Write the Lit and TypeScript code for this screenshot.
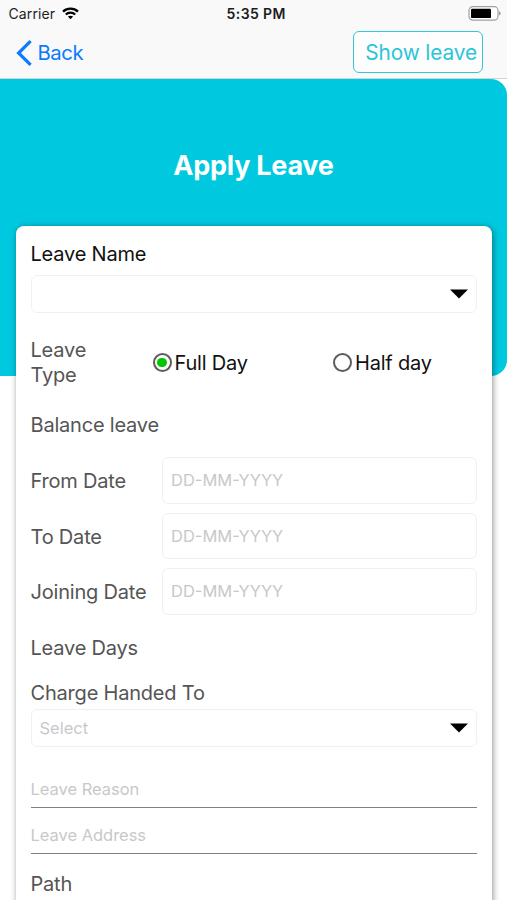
import { LitElement, html, css } from "lit";
import { customElement, property, state } from "lit/decorators.js";
import { classMap } from "lit/directives/class-map.js";

const caret = html`<svg class="caret" width="18" height="10" viewBox="0 0 18 10">
  <path d="M0 .4H18L9 9.6Z" fill="#000" />
</svg>`;

@customElement("status-bar")
class StatusBar extends LitElement {
  static styles = css`
    :host { display: grid; grid-template-columns: 1fr auto 1fr; align-items: center; height: 27px; padding: 0 6px 0 8.5px; color: #1c1c1e; font-size: 14px; box-sizing: border-box; }
    .left { display: flex; align-items: center; gap: 7px; letter-spacing: 0.1px; }
    .time { padding-left: 3px; font-weight: 600; letter-spacing: 0.4px; }
    .right { display: flex; justify-content: flex-end; }
    svg { display: block; }
  `;
  render() {
    return html`
      <div class="left">
        <span>Carrier</span>
        <svg width="17" height="13" viewBox="0 0 17 13" fill="none" stroke="#000" stroke-width="2.3">
          <path d="M1 4.6C5.2 .6 11.8 .6 16 4.6" />
          <path d="M3.8 7.5C6.4 5 10.6 5 13.2 7.5" />
          <path d="M5.9 9.6C7.4 8.3 9.6 8.3 11.1 9.6L8.5 12.2Z" fill="#000" stroke="none" />
        </svg>
      </div>
      <div class="time">5:35 PM</div>
      <div class="right">
        <svg width="33" height="15" viewBox="0 0 33 15">
          <rect x="1" y=".7" width="29" height="13.4" rx="3.8" fill="#fff" stroke="#a0a0a0" stroke-width="1.2" />
          <rect x="3" y="2.7" width="20" height="9.4" rx="1.2" fill="#000" />
          <path d="M31.2 5.2Q32.6 5.8 32.6 7.4T31.2 9.6Z" fill="#8a8a8a" />
        </svg>
      </div>
    `;
  }
}

@customElement("nav-bar")
class NavBar extends LitElement {
  static styles = css`
    :host { display: flex; justify-content: space-between; align-items: center; height: 52px; padding: 0 24px 0 16px; border-bottom: 1px solid #d2d4d5; box-sizing: border-box; }
    .back { display: flex; align-items: center; gap: 5.5px; color: #0a7aff; font-size: 20.3px; letter-spacing: -0.45px; }
    .show { display: flex; align-items: center; justify-content: flex-end; width: 130px; height: 42px; margin-bottom: 1px; padding-right: 5px; box-sizing: border-box; border: 1.4px solid #35c6d8; border-radius: 6px; color: #2bc5d9; font-size: 20.8px; letter-spacing: -0.1px; background: #fdfdfd; white-space: nowrap; }
    svg { display: block; }
  `;
  render() {
    return html`
      <div class="back">
        <svg width="16" height="26" viewBox="0 0 16 26" fill="none" stroke="#0a7aff" stroke-width="3.2">
          <path d="M14.6 1.2L2.6 13L14.6 24.8" />
        </svg>
        <span>Back</span>
      </div>
      <div class="show">Show leave</div>
    `;
  }
}

@customElement("radio-option")
class RadioOption extends LitElement {
  @property() label = "";
  @property({ type: Boolean }) checked = false;
  static styles = css`
    :host { display: flex; align-items: center; gap: 3px; color: #111; white-space: nowrap; }
    .ring { display: grid; place-items: center; width: 19px; height: 19px; box-sizing: border-box; border: 2px solid #5c5c5c; border-radius: 50%; }
    .on::after { content: ""; width: 9.4px; height: 9.4px; border-radius: 50%; background: #00c800; }
    .text { padding-top: 1px; }
  `;
  render() {
    return html`<span class=${classMap({ ring: true, on: this.checked })}></span><span class="text">${this.label}</span>`;
  }
}

@customElement("app-root")
class AppRoot extends LitElement {
  @state() dayType = "Full Day";
  static styles = css`
    :host { display: block; height: 900px; overflow: hidden; background: #fff; font-family: Inter, "Liberation Sans", sans-serif; }
    .top { background: #f9f9f9; height: 79px; }
    .hero { display: flex; justify-content: center; height: 297px; box-sizing: border-box; padding-top: 70px; background: #00c9df; border-radius: 0 16px 16px 0; color: #fff; font-size: 27px; font-weight: 700; letter-spacing: -0.25px; line-height: 34px; }
    .card { margin: -150px 15px 0 15.5px; height: 760px; padding: 13px 15px 0; box-sizing: border-box; background: #fff; border-radius: 8px; box-shadow: 1px 1px 6px rgba(0, 0, 0, 0.42); color: #555; font-size: 20px; letter-spacing: -0.2px; line-height: 30px; }
    .caret { display: block; }
    .name { color: #111; }
    .select { display: flex; align-items: center; justify-content: space-between; height: 38px; padding: 0 8px; box-sizing: border-box; border: 1.3px solid #f0f0f0; border-radius: 6px; color: #c8c8cb; font-size: 16.5px; letter-spacing: 0; }
    .first { margin-top: 6px; }
    .type { display: grid; grid-template-columns: 122px 180.5px 1fr; align-items: center; height: 49px; margin-top: 25px; line-height: 24.5px; }
    .balance { margin-top: 23px; }
    .dates { display: grid; gap: 9px; margin-top: 17px; }
    .date { display: grid; grid-template-columns: 131.5px 1fr; align-items: center; white-space: nowrap; }
    .label { padding-top: 1.5px; }
    .input { display: flex; align-items: center; height: 46.6px; padding-left: 8px; box-sizing: border-box; border: 1.3px solid #f0f0f0; border-radius: 6px; color: #c8c8cb; font-size: 16.5px; letter-spacing: 0; }
    .days { margin-top: 18px; }
    .charge { margin-top: 15px; }
    .second { margin-top: 1px; }
    .line { display: flex; align-items: center; box-sizing: border-box; height: 46.4px; padding-top: 10px; border-bottom: 1.4px solid #808080; color: #c8c8cb; font-size: 16.5px; letter-spacing: -0.03px; }
    .reason { margin-top: 14.6px; }
    .path { margin-top: 15px; }
  `;
  render() {
    return html`
      <div class="top"><status-bar></status-bar><nav-bar></nav-bar></div>
      <div class="hero">Apply Leave</div>
      <div class="card">
        <div class="name">Leave Name</div>
        <div class="select first"><span></span>${caret}</div>
        <div class="type">
          <span>Leave<br />Type</span>
          ${["Full Day", "Half day"].map(
            (d) => html`<radio-option .label=${d} .checked=${d === this.dayType}></radio-option>`
          )}
        </div>
        <div class="balance">Balance leave</div>
        <div class="dates">
          ${["From Date", "To Date", "Joining Date"].map(
            (d) => html`<div class="date"><span class="label">${d}</span><div class="input">DD-MM-YYYY</div></div>`
          )}
        </div>
        <div class="days">Leave Days</div>
        <div class="charge">Charge Handed To</div>
        <div class="select second"><span>Select</span>${caret}</div>
        <div class="line reason">Leave Reason</div>
        <div class="line">Leave Address</div>
        <div class="path">Path</div>
      </div>
    `;
  }
}
